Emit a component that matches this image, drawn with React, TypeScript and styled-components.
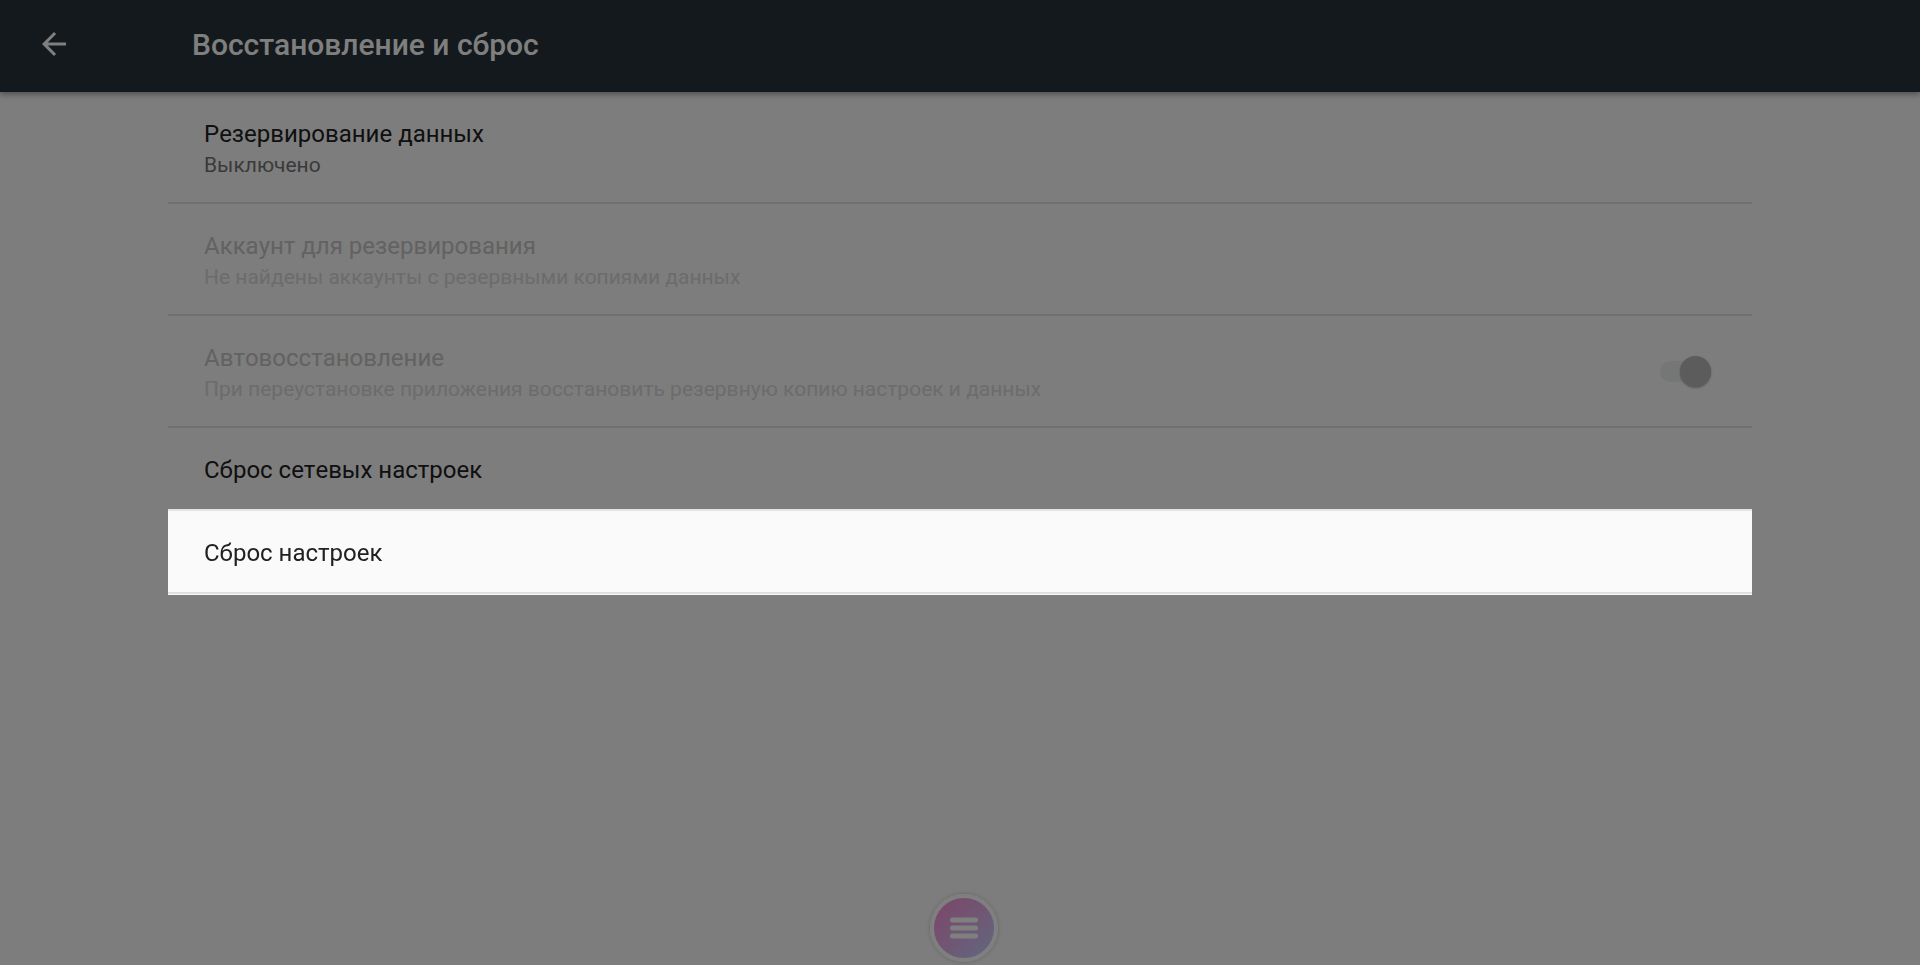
import React from "react";
import styled, { createGlobalStyle, css } from "styled-components";

const GlobalStyle = createGlobalStyle`
  * { box-sizing: border-box; }
  body {
    margin: 0;
    background: #fafafa;
    font-family: Roboto, "Noto Sans", sans-serif;
    color: #212121;
  }
`;

const Page = styled.div`
  min-height: 100vh;
  display: flex;
  flex-direction: column;
`;

const AppBar = styled.header`
  display: flex;
  align-items: center;
  height: 92px;
  padding: 0 24px 4px;
  background: #263238;
  color: #ffffff;
  box-shadow: 0 2px 6px rgba(0, 0, 0, 0.4);
`;

const BackButton = styled.button`
  display: flex;
  align-items: center;
  width: 168px;
  height: 60px;
  padding: 0 12px;
  border: 0;
  background: none;
  color: inherit;
`;

const Heading = styled.h1`
  margin: 0;
  padding-top: 2px;
  font-size: 30px;
  line-height: 36px;
  font-weight: 500;
`;

const List = styled.main`
  flex: 1;
  padding: 0 168px;
`;

const Row = styled.div<{ $disabled?: boolean; $highlighted?: boolean }>`
  display: flex;
  align-items: center;
  width: 100%;
  min-height: 83px;
  padding: 0 36px;
  border: 0;
  border-bottom: 2px solid #e0e0e0;
  background: none;
  font: inherit;
  text-align: left;
  color: ${(p) => (p.$disabled ? "#c4c4c4" : "#212121")};
  ${(p) =>
    p.$highlighted &&
    css`
      position: relative;
      z-index: 2;
      background: #fafafa;
      box-shadow: 0 -2px #e4e4e4, 0 1px #fafafa;
    `}
`;

const Texts = styled.span`
  flex: 1;
  align-self: flex-start;
  display: flex;
  flex-direction: column;
  padding: 26px 0 22px;
`;

const Title = styled.span`
  font-size: 24px;
  line-height: 32px;
  font-kerning: none;
`;

const Summary = styled.span<{ $disabled?: boolean }>`
  font-size: 21px;
  line-height: 30px;
  color: ${(p) => (p.$disabled ? "#d8d8d8" : "#757575")};
`;

const Toggle = styled.input`
  appearance: none;
  display: flex;
  align-items: center;
  justify-content: flex-end;
  width: 51px;
  height: 21px;
  margin: 0 5px 0 0;
  background: #ebeeed;
  border-radius: 11px;

  &::before {
    content: "";
    width: 31px;
    height: 31px;
    border-radius: 50%;
    background: #b9b9b9;
    box-shadow: 0 1px 2px rgba(0, 0, 0, 0.3);
  }
`;

const Scrim = styled.div`
  position: fixed;
  inset: 0;
  z-index: 1;
  background: rgba(0, 0, 0, 0.5);
  pointer-events: none;
`;

const MenuButton = styled.button`
  position: fixed;
  bottom: 3px;
  left: calc(50% + 4px);
  transform: translateX(-50%);
  display: flex;
  align-items: center;
  justify-content: center;
  width: 68px;
  height: 68px;
  padding: 0;
  border: 4px solid #ffffff;
  border-radius: 50%;
  background: linear-gradient(135deg, #ff86d0, #c0d4ff) border-box;
  box-shadow: 0 0 4px rgba(0, 0, 0, 0.2);
`;

type Item = {
  title: string;
  summary?: string;
  disabled?: boolean;
  highlighted?: boolean;
  toggle?: boolean;
};

const items: Item[] = [
  { title: "Резервирование данных", summary: "Выключено" },
  {
    title: "Аккаунт для резервирования",
    summary: "Не найдены аккаунты с резервными копиями данных",
    disabled: true,
  },
  {
    title: "Автовосстановление",
    summary: "При переустановке приложения восстановить резервную копию настроек и данных",
    disabled: true,
    toggle: true,
  },
  { title: "Сброс сетевых настроек" },
  { title: "Сброс настроек", highlighted: true },
];

function SettingRow({ title, summary, disabled, highlighted, toggle }: Item) {
  const texts = (
    <Texts>
      <Title>{title}</Title>
      {summary && <Summary $disabled={disabled}>{summary}</Summary>}
    </Texts>
  );
  if (toggle) {
    return (
      <Row as="label" $disabled={disabled}>
        {texts}
        <Toggle type="checkbox" role="switch" defaultChecked disabled={disabled} />
      </Row>
    );
  }
  return (
    <Row as="button" disabled={disabled} $disabled={disabled} $highlighted={highlighted}>
      {texts}
    </Row>
  );
}

export default function App() {
  return (
    <Page>
      <GlobalStyle />
      <AppBar>
        <BackButton aria-label="Назад">
          <svg width="36" height="36" viewBox="0 0 24 24" fill="currentColor">
            <path d="M20 11H7.83l5.59-5.59L12 4l-8 8 8 8 1.41-1.41L7.83 13H20v-2z" />
          </svg>
        </BackButton>
        <Heading>Восстановление и сброс</Heading>
      </AppBar>
      <List>
        {items.map((item) => (
          <SettingRow key={item.title} {...item} />
        ))}
      </List>
      <MenuButton aria-label="Меню">
        <svg width="28" height="22" viewBox="0 0 28 22" fill="#ffffff">
          <rect y="0.5" width="28" height="5" rx="2.5" />
          <rect y="8.5" width="28" height="5" rx="2.5" />
          <rect y="16.5" width="28" height="5" rx="2.5" />
        </svg>
      </MenuButton>
      <Scrim />
    </Page>
  );
}
